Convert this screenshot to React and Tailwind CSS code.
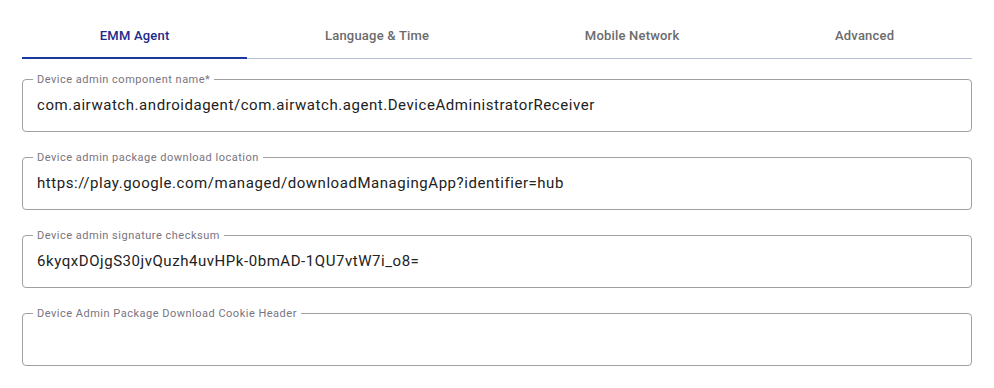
import { useState } from 'react';

const TABS = ['EMM Agent', 'Language & Time', 'Mobile Network', 'Advanced'];

const FIELDS = [
  {
    label: 'Device admin component name*',
    value: 'com.airwatch.androidagent/com.airwatch.agent.DeviceAdministratorReceiver',
  },
  {
    label: 'Device admin package download location',
    value: 'https://play.google.com/managed/downloadManagingApp?identifier=hub',
  },
  {
    label: 'Device admin signature checksum',
    value: '6kyqxDOjgS30jvQuzh4uvHPk-0bmAD-1QU7vtW7i_o8=',
  },
  {
    label: 'Device Admin Package Download Cookie Header',
    value: '',
  },
];

// Outlined text field with the label sitting in the top border
function OutlinedField({ label, value }) {
  return (
    <fieldset className="border border-[#a0a0a0] rounded-[4px] px-[10px] m-0 min-w-0">
      <legend className="px-1 text-[11px] leading-[13px] tracking-[0.5px] text-[#787480]">
        {label}
      </legend>
      <div className="h-[45px] pt-[9px] pl-[4px] text-[15px] leading-[20px] tracking-[0.55px] text-[#222] whitespace-nowrap overflow-hidden">
        {value}
      </div>
    </fieldset>
  );
}

export default function App() {
  const [active, setActive] = useState(0);

  return (
    <div
      className="w-[994px] h-[388px] bg-white px-[22px] pt-[11px] overflow-hidden"
      style={{ fontFamily: 'Roboto, "Liberation Sans", sans-serif' }}
    >
      {/* Tabs */}
      <div className="flex border-b border-[#b6bfd6]">
        {TABS.map((t, i) => (
          <button
            key={t}
            onClick={() => setActive(i)}
            className={`flex-auto h-[48px] pt-[3px] -mb-px text-[13px] font-medium tracking-[0.2px] border-b-2 ${
              i === active
                ? 'text-[#1c2a8c] border-[#1a3a9f]'
                : 'text-[#6b6b6b] border-transparent'
            }`}
          >
            {t}
          </button>
        ))}
      </div>

      {/* Fields */}
      <div className="flex flex-col gap-[19px] pt-[14px]">
        {FIELDS.map((f) => (
          <OutlinedField key={f.label} label={f.label} value={f.value} />
        ))}
      </div>
    </div>
  );
}
